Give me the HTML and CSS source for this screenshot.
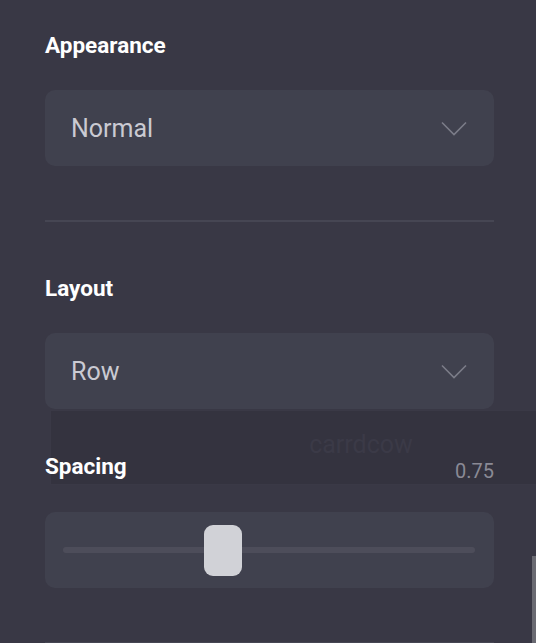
FILE: index.html
```html
<!DOCTYPE html>
<html>
<head>
<meta charset="utf-8">
<link rel="stylesheet" href="styles.css">
</head>
<body>
<div class="panel">
  <section class="group first">
    <div class="label">Appearance</div>
    <div class="select">
      <span class="select-text">Normal</span>
      <svg class="chev" width="26" height="15" viewBox="0 0 26 15"><path d="M1 1.5 L13 13.5 L25 1.5" fill="none" stroke="#7b7c88" stroke-width="1.6"/></svg>
    </div>
  </section>
  <hr class="divider">
  <section class="group">
    <div class="label">Layout</div>
    <div class="select">
      <span class="select-text">Row</span>
      <svg class="chev" width="26" height="15" viewBox="0 0 26 15"><path d="M1 1.5 L13 13.5 L25 1.5" fill="none" stroke="#7b7c88" stroke-width="1.6"/></svg>
    </div>
  </section>
  <section class="group spacing">
    <div class="label-row">
      <div class="label">Spacing</div>
      <div class="value">0.75</div>
    </div>
    <div class="slider">
      <div class="track">
        <div class="thumb" style="left: 141px"></div>
      </div>
    </div>
  </section>
  <hr class="divider">
  <div class="overlay"><span>carrdcow</span></div>
  <div class="scrollbar"></div>
</div>
</body>
</html>
```
FILE: styles.css
```css
html, body {
  margin: 0;
  padding: 0;
  background: #393845;
  height: 100%;
  overflow: hidden;
}
.panel {
  position: relative;
  height: 643px;
  padding: 0 42px 0 45px;
  font-family: Roboto, "Liberation Sans", sans-serif;
  overflow: hidden;
}
.group {
  position: relative;
  z-index: 1;
  width: 449px;
}
.group.first { padding-top: 33px; }
.group + .group { margin-top: 45px; }
.divider {
  width: 449px;
  height: 2px;
  margin: 54px 0 0 0;
  border: 0;
  background: #464653;
}
.divider + .group { margin-top: 54px; }
.label {
  font-size: 22.5px;
  font-weight: 700;
  line-height: 24px;
  color: #ffffff;
  height: 24px;
}
.select {
  margin-top: 33px;
  height: 76px;
  background: #40414e;
  border-radius: 10px;
  display: flex;
  align-items: center;
  justify-content: space-between;
  padding: 0 27px 0 26px;
  box-sizing: border-box;
}
.select-text {
  font-size: 25px;
  color: #cacad2;
}
.chev { display: block; }
.label-row {
  display: flex;
  justify-content: space-between;
  align-items: flex-start;
  height: 24px;
}
.value {
  font-size: 20px;
  line-height: 24px;
  color: #8a8a95;
  padding-top: 5px;
}
.slider {
  margin-top: 34px;
  height: 76px;
  background: #40414e;
  border-radius: 10px;
  display: flex;
  align-items: center;
  padding: 0 19px 0 18px;
  box-sizing: border-box;
}
.track {
  position: relative;
  flex: 1;
  height: 6px;
  border-radius: 3px;
  background: #4d4d5a;
}
.thumb {
  position: absolute;
  top: -22px;
  width: 38px;
  height: 51px;
  border-radius: 9px;
  background: #d1d2d7;
}
.overlay {
  position: absolute;
  z-index: 0;
  left: 50px;
  top: 410px;
  width: 620px;
  height: 73px;
  background: #34333f;
  border: 1px solid #3a3946;
  display: flex;
  align-items: center;
  justify-content: center;
  font-size: 25px;
  color: #3b3a47;
}
.overlay span { margin-top: -6px; }
.scrollbar {
  position: absolute;
  z-index: 2;
  right: 0;
  top: 556px;
  width: 4px;
  height: 90px;
  background: #6a6a72;
}
```
